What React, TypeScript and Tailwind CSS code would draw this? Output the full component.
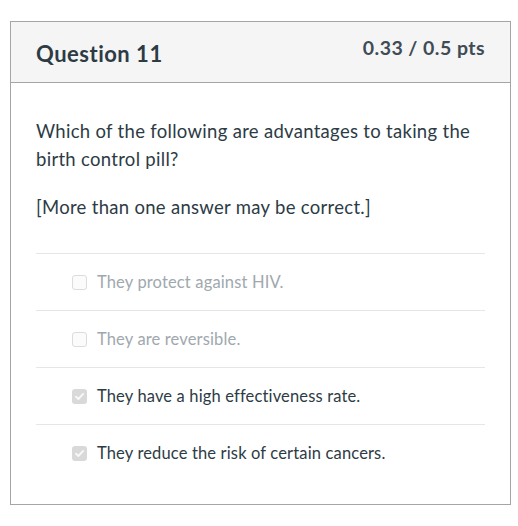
const ANSWERS = [
  { text: 'They protect against HIV.', checked: false },
  { text: 'They are reversible.', checked: false },
  { text: 'They have a high effectiveness rate.', checked: true },
  { text: 'They reduce the risk of certain cancers.', checked: true },
];

function Box({ checked }: { checked: boolean }) {
  if (checked) {
    return (
      <span className="flex h-[15px] w-[15px] shrink-0 items-center justify-center rounded-[3px] bg-[#d9d9d9]">
        <svg width="11" height="11" viewBox="0 0 10 10" fill="none">
          <path d="M1.8 5.2 L4 7.3 L8.3 2.6" stroke="#f7f7f7" strokeWidth="1.8" strokeLinecap="round" strokeLinejoin="round" />
        </svg>
      </span>
    );
  }
  return <span className="block h-[15px] w-[15px] shrink-0 rounded-[3px] border border-[#dcdcdc] bg-[#fbfbfb]" />;
}

export default function App() {
  return (
    <div className="min-h-[526px] bg-white pl-[10px] pt-[21px] font-['Lato',sans-serif] text-[#2d3b45]">
      <div className="w-[501px] border border-[#a5a5a5]">
        <div className="flex h-[61px] justify-between border-b border-[#a5a5a5] bg-[#f5f5f5] pl-[25px] pr-[25px]">
          <h2 className="pt-[18px] text-[22px] font-bold leading-[27px] tracking-[0.5px]">Question 11</h2>
          <div className="pt-[14px] text-[19.5px] font-bold leading-[24px] tracking-[0.45px] text-[#3f4c56]">0.33 / 0.5 pts</div>
        </div>
        <div className="px-[25px] pb-[23px] pt-[34px]">
          <p className="text-[18.5px] leading-[28px] tracking-[0.3px]">
            Which of the following are advantages to taking the birth control pill?
          </p>
          <p className="mt-[20px] text-[18.5px] leading-[28px] tracking-[0.3px]">[More than one answer may be correct.]</p>
          <div className="mt-[32px]">
            {ANSWERS.map((a) => (
              <div key={a.text} className="flex h-[57px] items-center gap-[10px] border-t border-[#e6e6e6] pl-[36px]">
                <Box checked={a.checked} />
                <span className={`text-[16.5px] tracking-[0.15px] ${a.checked ? 'text-[#2d3b45]' : 'text-[#a0a8ae]'}`}>{a.text}</span>
              </div>
            ))}
          </div>
        </div>
      </div>
    </div>
  );
}
